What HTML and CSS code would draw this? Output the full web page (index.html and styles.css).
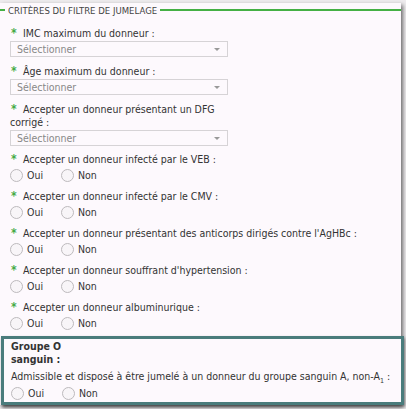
FILE: index.html
```html
<html lang="fr">
<head>
  <meta charset="UTF-8" />
  <title>Critères du filtre de jumelage</title>
  <link rel="stylesheet" href="styles.css">
</head>
<body>

  <div class="panel">

    <!-- Titre de la section -->
    <div class="legend"><span>Critères du filtre de jumelage</span></div>

    <div class="champ">
      <div class="label"><span class="req">*</span>IMC maximum du donneur :</div>
      <div class="select">Sélectionner<span class="fleche"></span></div>
    </div>

    <div class="champ">
      <div class="label"><span class="req">*</span>Âge maximum du donneur :</div>
      <div class="select">Sélectionner<span class="fleche"></span></div>
    </div>

    <div class="champ">
      <div class="label"><span class="req">*</span>Accepter un donneur présentant un DFG<br>corrigé :</div>
      <div class="select">Sélectionner<span class="fleche"></span></div>
    </div>

    <div class="champ premier-radio">
      <div class="label"><span class="req">*</span>Accepter un donneur infecté par le VEB :</div>
      <div class="radios">
        <label><span class="radio"></span>Oui</label>
        <label><span class="radio"></span>Non</label>
      </div>
    </div>

    <div class="champ">
      <div class="label"><span class="req">*</span>Accepter un donneur infecté par le CMV :</div>
      <div class="radios">
        <label><span class="radio"></span>Oui</label>
        <label><span class="radio"></span>Non</label>
      </div>
    </div>

    <div class="champ">
      <div class="label"><span class="req">*</span>Accepter un donneur présentant des anticorps dirigés contre l'AgHBc :</div>
      <div class="radios">
        <label><span class="radio"></span>Oui</label>
        <label><span class="radio"></span>Non</label>
      </div>
    </div>

    <div class="champ">
      <div class="label"><span class="req">*</span>Accepter un donneur souffrant d'hypertension :</div>
      <div class="radios">
        <label><span class="radio"></span>Oui</label>
        <label><span class="radio"></span>Non</label>
      </div>
    </div>

    <div class="champ">
      <div class="label"><span class="req">*</span>Accepter un donneur albuminurique :</div>
      <div class="radios">
        <label><span class="radio"></span>Oui</label>
        <label><span class="radio"></span>Non</label>
      </div>
    </div>

    <!-- Bloc groupe sanguin -->
    <div class="groupe">
      <div class="groupe-titre">Groupe O sanguin :</div>
      <div class="groupe-texte">Admissible et disposé à être jumelé à un donneur du groupe sanguin A, non-A<sub>1</sub> :</div>
      <div class="radios">
        <label><span class="radio"></span>Oui</label>
        <label><span class="radio"></span>Non</label>
      </div>
    </div>

  </div>

</body>
</html>
```

FILE: styles.css
```css
body {
  margin: 0;
  background-color: #eeecee;
  font-family: "DejaVu Sans Condensed", "DejaVu Sans", sans-serif;
  font-size: 10.5px;
  color: #333;
}

.panel {
  width: 401px;
  margin-top: 3px;
  background-color: #fdf9fd;
  box-shadow: 2px 2px 4px rgba(0,0,0,0.55);
}

.legend {
  display: flex;
  align-items: center;
  height: 14px;
  font-size: 9.5px;
  text-transform: uppercase;
  color: #444;
}

.legend::before,
.legend::after {
  content: "";
  height: 2px;
  background-color: #44b044;
}

.legend::before {
  width: 5px;
}

.legend::after {
  flex: 1;
}

.legend span {
  padding: 0 3px;
}

.champ {
  padding: 0 10px;
  margin-top: 8px;
}

.champ:nth-child(2) {
  margin-top: 10px;
}

.champ.premier-radio {
  margin-top: 7px;
}

.label {
  line-height: 13px;
  margin-bottom: 1px;
}

.req {
  display: inline-block;
  width: 12px;
  padding-left: 1px;
  color: #44aa44;
  font-weight: bold;
  font-size: 12px;
}

.select {
  position: relative;
  box-sizing: content-box;
  width: 210px;
  height: 14px;
  padding: 0 0 0 6px;
  line-height: 14px;
  border: 1px solid #d6d3d6;
  background-color: #fdf9fd;
  color: #888;
}

.fleche {
  position: absolute;
  right: 7px;
  top: 6px;
  border-left: 3px solid transparent;
  border-right: 3px solid transparent;
  border-top: 3px solid #999;
}

.radios {
  display: flex;
  gap: 13px;
  height: 14px;
  margin-top: 2px;
  align-items: center;
}

.radios label {
  display: flex;
  align-items: center;
  gap: 4px;
  width: 38px;
}

.radio {
  width: 11px;
  height: 11px;
  border: 1px solid #bdbabd;
  border-radius: 50%;
  background-color: #f8f5f8;
}

.groupe {
  box-sizing: border-box;
  width: 403px;
  margin: 6px 0 0 1px;
  padding: 1px 7px 2px 7px;
  border: 3px solid #4a7c7c;
  background-color: #fdf9fd;
  box-shadow: 1px 2px 3px rgba(0,0,0,0.45);
}

.groupe-titre {
  width: 62px;
  font-weight: bold;
  line-height: 13px;
}

.groupe-texte {
  margin-top: 4px;
  line-height: 13px;
}

.groupe-texte sub {
  font-size: 7px;
  line-height: 0;
}

.groupe .radios {
  margin-top: 3px;
}
```
